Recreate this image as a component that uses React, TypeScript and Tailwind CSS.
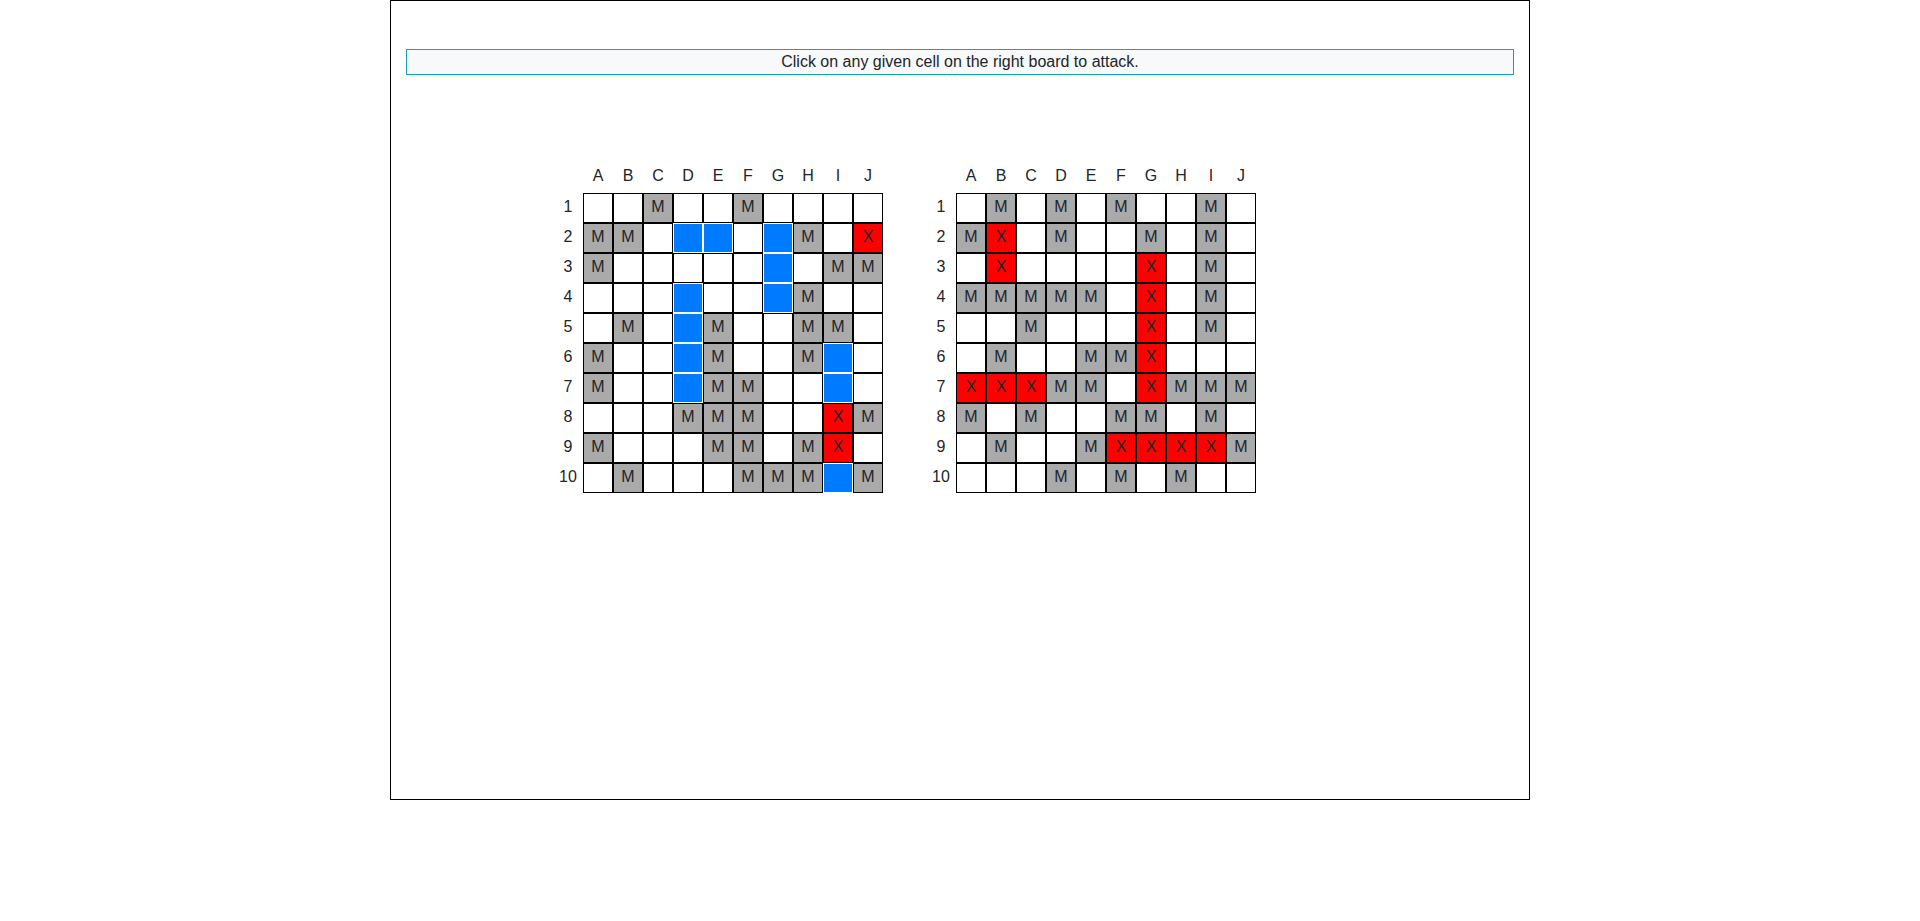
import React from "react";

const COLS = ["A", "B", "C", "D", "E", "F", "G", "H", "I", "J"];

// . = empty, M = miss, X = hit, S = own ship
const playerBoard = [
  "..M..M....",
  "MM.SS.SM.X",
  "M.....S.MM",
  "...S..SM..",
  ".M.SM..MM.",
  "M..SM..MS.",
  "M..SMM..S.",
  "...MMM..XM",
  "M...MM.MX.",
  ".M...MMMSM",
];

const enemyBoard = [
  ".M.M.M..M.",
  "MX.M..M.M.",
  ".X....X.M.",
  "MMMMM.X.M.",
  "..M...X.M.",
  ".M..MMX...",
  "XXXMM.XMMM",
  "M.M..MM.M.",
  ".M..MXXXXM",
  "...M.M.M..",
];

const cellClass = (v: string) => {
  if (v === "M") return "bg-[#aaaaaa] border-black";
  if (v === "X") return "bg-[#ff0000] border-black";
  if (v === "S") return "bg-[#007bff] border-white";
  return "bg-white border-black";
};

const Board: React.FC<{ rows: string[]; clickable?: boolean }> = ({ rows, clickable }) => {
  return (
    <div className="flex flex-col">
      <div className="flex">
        <div className="w-[30px] h-[30px]" />
        {COLS.map((c) => (
          <div key={c} className="w-[30px] h-[30px] flex items-center justify-center pb-[4px] leading-6">
            {c}
          </div>
        ))}
      </div>
      {rows.map((row, r) => (
        <div key={r} className="flex">
          <div className="w-[30px] h-[30px] flex items-center justify-center pb-[3px] leading-6">
            {r + 1}
          </div>
          {row.split("").map((v, c) => (
            <div
              key={c}
              className={`w-[30px] h-[30px] border flex items-center justify-center pb-[3px] leading-6 ${cellClass(v)} ${clickable ? "cursor-pointer" : ""}`}
            >
              {v === "M" || v === "X" ? v : ""}
            </div>
          ))}
        </div>
      ))}
    </div>
  );
};

export default function App() {
  return (
    <div className="min-h-screen bg-white text-[#212529] text-base font-['Liberation_Sans',Arial,sans-serif]">
      <div className="mx-auto w-[1140px] h-[800px] border border-black px-[15px]">
        <div className="mt-[48px] border border-[#17a2b8] bg-[#f8f9fa] text-center leading-6">
          Click on any given cell on the right board to attack.
        </div>
        <div className="mt-[88px] ml-[147px] flex gap-[43px]">
          <Board rows={playerBoard} />
          <Board rows={enemyBoard} clickable />
        </div>
      </div>
    </div>
  );
}
